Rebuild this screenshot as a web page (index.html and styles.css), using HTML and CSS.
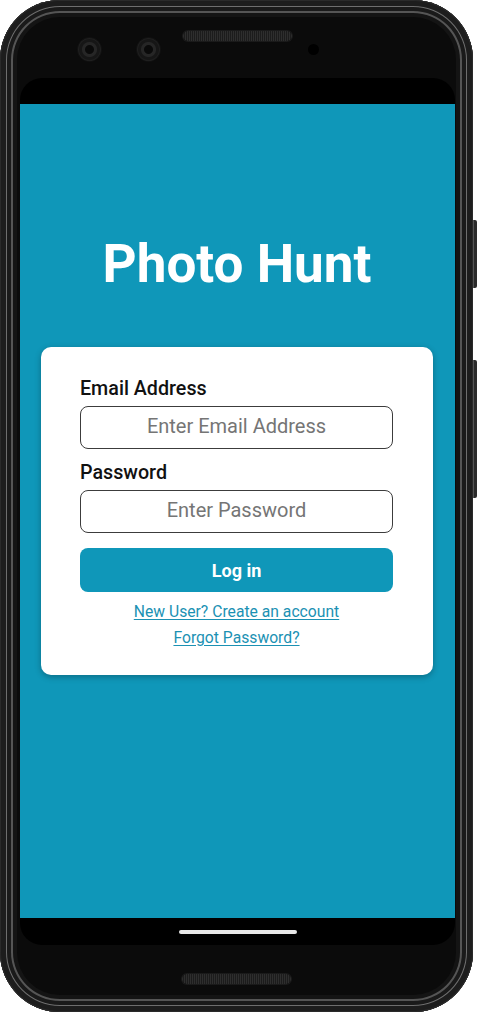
FILE: index.html
```html
<!DOCTYPE html>
<html lang="en">
<head>
<meta charset="utf-8">
<title>Photo Hunt</title>
<link rel="stylesheet" href="styles.css">
</head>
<body>
<div class="phone">
  <span class="side-btn side-btn-power"></span>
  <span class="side-btn side-btn-volume"></span>
  <div class="top-bezel">
    <span class="camera cam-left"></span>
    <span class="camera cam-right"></span>
    <span class="speaker speaker-top"></span>
    <span class="sensor"></span>
  </div>
  <div class="screen">
    <div class="status-bar"></div>
    <main class="app">
      <h1 class="title">Photo Hunt</h1>
      <form class="card">
        <label class="label" for="email">Email Address</label>
        <input class="input" id="email" type="email" placeholder="Enter Email Address">
        <label class="label label-password" for="password">Password</label>
        <input class="input" id="password" type="password" placeholder="Enter Password">
        <button class="login-btn" type="button">Log in</button>
        <div class="links">
          <a class="link" href="#">New User? Create an account</a>
          <a class="link" href="#">Forgot Password?</a>
        </div>
      </form>
    </main>
    <div class="nav-bar"><span class="home-pill"></span></div>
  </div>
  <div class="bottom-bezel">
    <span class="speaker speaker-bottom"></span>
  </div>
</div>
</body>
</html>
```

FILE: styles.css
```css
* { box-sizing: border-box; }

html, body {
  margin: 0;
  padding: 0;
  background: #ffffff;
  font-family: Roboto, "Liberation Sans", Arial, sans-serif;
}

.phone {
  position: relative;
  width: 473px;
  height: 1012px;
  border-radius: 60px;
  background: #0b0b0b;
  padding: 0 18px 0 20px;
  display: flex;
  flex-direction: column;
  box-shadow:
    inset 0 0 0 1px #2a2a2a,
    inset 0 0 0 6px #1d1d1d,
    inset 0 0 0 7px #6e6e6e,
    inset 0 0 0 11px #1a1a1a,
    inset 0 0 0 13px #555555,
    inset 0 0 0 17px #141414;
}

.side-btn {
  position: absolute;
  left: 100%;
  width: 4px;
  background: #2b2b2b;
  border-left: 1px solid #555;
  border-radius: 0 2px 2px 0;
}
.side-btn-power { top: 220px; height: 68px; }
.side-btn-volume { top: 360px; height: 138px; }

.top-bezel {
  height: 78px;
  display: flex;
  align-items: flex-start;
  flex-shrink: 0;
}

.camera {
  width: 23px;
  height: 23px;
  border-radius: 50%;
  margin-top: 38px;
  background: radial-gradient(circle at 50% 50%, #0a0a0a 0 4px, #262626 5px 7px, #161616 8px 10px, #1f1f1f 11px);
  box-shadow: 0 0 0 1px #111;
}
.cam-left { margin-left: 58px; }
.cam-right { margin-left: 36px; }

.speaker {
  width: 109px;
  height: 10px;
  border-radius: 5px;
  background:
    repeating-linear-gradient(90deg, #2e2e2e 0 1px, #1c1c1c 1px 2px);
  box-shadow: 0 0 0 1px #1a1a1a;
}
.speaker-top {
  margin-left: 23px;
  margin-top: 31px;
}

.sensor {
  width: 11px;
  height: 11px;
  border-radius: 50%;
  margin-left: 16px;
  margin-top: 44px;
  background: #000;
}

.screen {
  height: 867px;
  flex-shrink: 0;
  background: #000;
  border-radius: 22px;
  overflow: hidden;
  display: flex;
  flex-direction: column;
}

.status-bar {
  height: 26px;
  flex-shrink: 0;
}

.app {
  height: 814px;
  flex-shrink: 0;
  background: #0f97b9;
  padding: 130px 22px 0 21px;
  display: flex;
  flex-direction: column;
}

.title {
  margin: 0;
  text-align: center;
  color: #ffffff;
  font-size: 53px;
  line-height: 60px;
  font-weight: 700;
}

.card {
  margin: 53px 0 0;
  background: #ffffff;
  border-radius: 10px;
  padding: 31px 40px 24px 39px;
  display: flex;
  flex-direction: column;
  box-shadow: 0 2px 6px rgba(0, 0, 0, 0.28);
}

.label {
  font-size: 19.7px;
  line-height: 22px;
  font-weight: 500;
  color: #111;
}
.label-password { margin-top: 13px; }

.input {
  margin-top: 6px;
  height: 43px;
  width: 100%;
  border: 1px solid #3c3c3c;
  border-radius: 8px;
  background: #fff;
  font-family: Roboto, "Liberation Sans", Arial, sans-serif;
  font-size: 20px;
  text-align: center;
  color: #222;
  padding: 0 10px 3px;
  outline: none;
}
.input::placeholder { color: #757575; opacity: 1; }

.login-btn {
  margin-top: 15px;
  height: 44px;
  width: 100%;
  border: none;
  border-radius: 8px;
  background: #0f97b9;
  color: #fff;
  font-family: Roboto, "Liberation Sans", Arial, sans-serif;
  font-size: 18px;
  font-weight: 700;
  cursor: pointer;
}

.links {
  margin-top: 7px;
  display: flex;
  flex-direction: column;
  align-items: center;
}

.link {
  font-size: 15.7px;
  line-height: 26px;
  color: #1b91b3;
  text-decoration: underline;
  text-underline-offset: 2px;
}

.nav-bar {
  flex: 1;
  display: flex;
  justify-content: center;
  align-items: flex-start;
  padding-top: 12px;
}

.home-pill {
  width: 118px;
  height: 4px;
  border-radius: 2px;
  background: #e8e8e8;
}

.bottom-bezel {
  flex: 1;
  display: flex;
  justify-content: center;
  align-items: flex-start;
  padding-top: 29px;
}
.speaker-bottom { margin-right: 3px; }
```
